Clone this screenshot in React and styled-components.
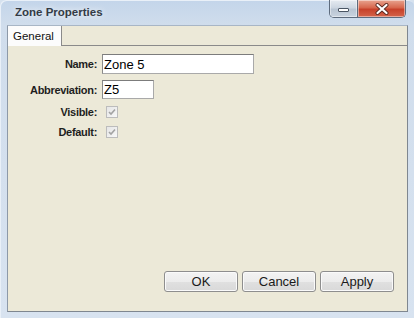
import styled, { createGlobalStyle } from "styled-components";

const GlobalStyle = createGlobalStyle`
  html, body {
    margin: 0;
    padding: 0;
  }
  body {
    background: #d6e2ef;
    font-family: "Liberation Sans", Arial, sans-serif;
  }
`;

const Window = styled.div`
  width: 414px;
  height: 318px;
  box-sizing: border-box;
  display: flex;
  flex-direction: column;
  padding: 0 6px 6px 7px;
  border-radius: 6px 6px 0 0;
  background: linear-gradient(to bottom, #c3d5ea 0px, #d0ddec 25px, #d8e3f0 100%);
  box-shadow: inset 1px 1px 0 #e9f0f8;
`;

const TitleBar = styled.div`
  height: 25px;
  display: flex;
  align-items: flex-start;
`;

const Title = styled.div`
  flex: 1;
  height: 25px;
  line-height: 25px;
  padding-left: 8px;
  font-size: 11.5px;
  font-weight: bold;
  color: #333b45;
  text-shadow: 0 0 6px rgba(255, 255, 255, 0.9);
`;

const Caption = styled.div`
  display: flex;
  margin-right: 2px;
  height: 18px;
  border: 1px solid #5d6b7d;
  border-top: none;
  border-radius: 0 0 5px 5px;
  overflow: hidden;
  box-sizing: border-box;
`;

const CaptionButton = styled.div`
  width: ${(p) => p.$w}px;
  height: 100%;
  display: flex;
  align-items: center;
  justify-content: center;
  box-sizing: border-box;
  background: ${(p) =>
    p.$close
      ? "linear-gradient(to bottom, #e8a48f 0%, #d7674d 45%, #c7412a 55%, #d4644a 100%)"
      : "linear-gradient(to bottom, #e6ebf1 0%, #cdd6e1 45%, #b9c5d3 55%, #c9d3df 100%)"};
  border-left: ${(p) => (p.$close ? "1px solid #5d6b7d" : "none")};
  box-shadow: inset 0 0 0 1px rgba(255, 255, 255, 0.45);
`;

const Client = styled.div`
  flex: 1;
  display: flex;
  flex-direction: column;
  background: #ece9d8;
  border: 1px solid #7f8790;
  border-top-color: #a8b6c6;
  border-left-color: #8d99a8;
`;

const TabStrip = styled.div`
  display: flex;
  height: 20px;
`;

const Tab = styled.div`
  width: 54px;
  box-sizing: border-box;
  padding-left: 5px;
  line-height: 20px;
  font-size: 11.5px;
  color: #111;
  background: #fcfcfc;
  border-right: 1px solid #8a8a8a;
`;

const TabFiller = styled.div`
  flex: 1;
  border-bottom: 1px solid #8a8a8a;
`;

const Panel = styled.div`
  flex: 1;
  display: flex;
  flex-direction: column;
  padding: 8px 0 19px 0;
`;

const Form = styled.div`
  flex: 1;
  display: flex;
  flex-direction: column;
`;

const Row = styled.div`
  display: grid;
  grid-template-columns: 89px 1fr;
  column-gap: 5px;
  align-items: center;
  height: ${(p) => p.$h}px;
  margin-top: ${(p) => p.$mt || 0}px;
`;

const Label = styled.div`
  text-align: right;
  font-size: 11px;
  font-weight: bold;
  letter-spacing: -0.3px;
  color: #1e1e1e;
`;

const Field = styled.input`
  box-sizing: border-box;
  width: ${(p) => p.$w}px;
  height: ${(p) => p.$h}px;
  margin: 0;
  padding: 0 0 0 1px;
  font-family: "Liberation Sans", Arial, sans-serif;
  font-size: 13px;
  color: #000;
  background: #fff;
  border: 1px solid #a9a9a9;
  border-top-color: #7c7c7c;
  border-left-color: #8a8a8a;
  outline: none;
`;

const Check = styled.div`
  width: 12px;
  height: 12px;
  margin-left: 4px;
  box-sizing: border-box;
  border: 1px solid #bcbcbc;
  background: linear-gradient(to bottom right, #e6e6e6, #f7f7f7);
  display: flex;
  align-items: center;
  justify-content: center;
`;

const ButtonBar = styled.div`
  display: flex;
  justify-content: flex-end;
  gap: 4px;
  padding-right: 13px;
`;

const Button = styled.button`
  width: 74px;
  height: 21px;
  margin: 0;
  padding: 0;
  font-family: "Liberation Sans", Arial, sans-serif;
  font-size: 13px;
  color: #1a1a1a;
  border: 1px solid #8e8e8e;
  border-radius: 3px;
  background: linear-gradient(to bottom, #f3f3f3 0%, #ececec 50%, #e0e0e0 51%, #d9d9d9 100%);
  box-shadow: inset 0 0 0 1px #fafafa;
`;

function CheckMark() {
  return (
    <svg width="8" height="8" viewBox="0 0 8 8">
      <path d="M1 4 L3 6 L7 1.5" fill="none" stroke="#a3a3a3" strokeWidth="1.6" />
    </svg>
  );
}

function MinimizeIcon() {
  return (
    <svg width="13" height="9" viewBox="0 0 13 9">
      <rect x="1.5" y="4.5" width="10" height="3" rx="0.5" fill="#fff" stroke="#4a5563" strokeWidth="1" />
    </svg>
  );
}

function CloseIcon() {
  return (
    <svg width="14" height="12" viewBox="0 0 14 12">
      <path d="M2.5 2 L11.5 10 M11.5 2 L2.5 10" stroke="#5a2a22" strokeWidth="4" strokeLinecap="round" />
      <path d="M2.5 2 L11.5 10 M11.5 2 L2.5 10" stroke="#fff" strokeWidth="2.2" strokeLinecap="round" />
    </svg>
  );
}

export default function App() {
  return (
    <>
      <GlobalStyle />
      <Window>
        <TitleBar>
          <Title>Zone Properties</Title>
          <Caption>
            <CaptionButton $w={27}>
              <MinimizeIcon />
            </CaptionButton>
            <CaptionButton $w={48} $close>
              <CloseIcon />
            </CaptionButton>
          </Caption>
        </TitleBar>
        <Client>
          <TabStrip>
            <Tab>General</Tab>
            <TabFiller />
          </TabStrip>
          <Panel>
            <Form>
              <Row $h={20}>
                <Label>Name:</Label>
                <Field $w={152} $h={20} defaultValue="Zone 5" readOnly />
              </Row>
              <Row $h={19} $mt={6}>
                <Label>Abbreviation:</Label>
                <Field $w={52} $h={19} defaultValue="Z5" readOnly />
              </Row>
              <Row $h={20} $mt={3}>
                <Label>Visible:</Label>
                <Check>
                  <CheckMark />
                </Check>
              </Row>
              <Row $h={20}>
                <Label>Default:</Label>
                <Check>
                  <CheckMark />
                </Check>
              </Row>
            </Form>
            <ButtonBar>
              <Button>OK</Button>
              <Button>Cancel</Button>
              <Button>Apply</Button>
            </ButtonBar>
          </Panel>
        </Client>
      </Window>
    </>
  );
}
